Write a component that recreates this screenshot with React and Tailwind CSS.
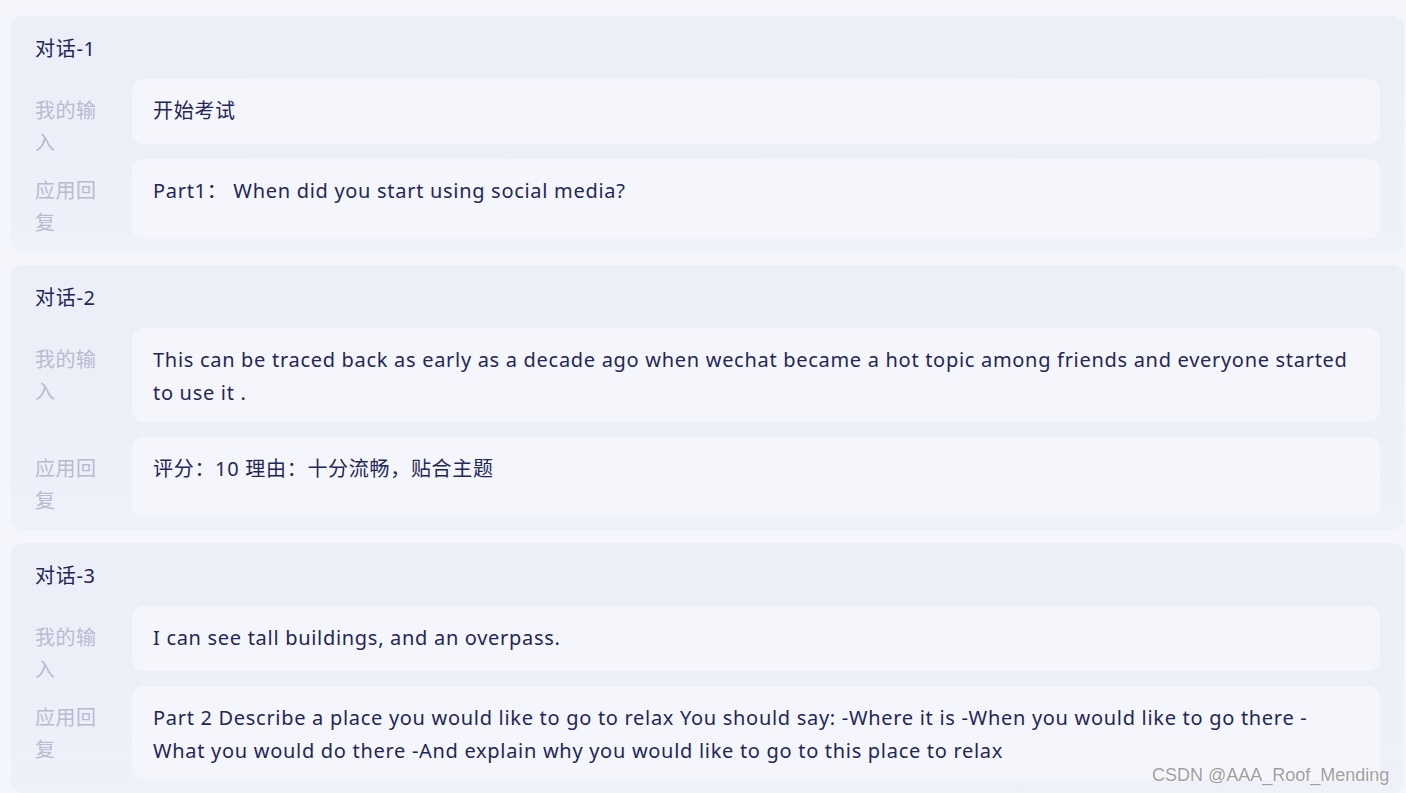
import React from 'react';

const DIALOGS = [
  {
    title: '对话-1',
    input: '开始考试',
    reply: 'Part1： When did you start using social media?',
  },
  {
    title: '对话-2',
    input:
      'This can be traced back as early as a decade ago when wechat became a hot topic among friends and everyone started to use it .',
    reply: '评分：10 理由：十分流畅，贴合主题',
  },
  {
    title: '对话-3',
    input: 'I can see tall buildings, and an overpass.',
    reply:
      'Part 2 Describe a place you would like to go to relax You should say: -Where it is -When you would like to go there -What you would do there -And explain why you would like to go to this place to relax',
  },
];

const FONT = { fontFamily: '"Noto Sans", "Noto Sans CJK SC", sans-serif' };

function Row({ label, text, last }) {
  return (
    <div className="flex items-stretch">
      <div className="w-[72px] mr-[25px] shrink-0 pt-[16px] text-[20px] leading-[32px] tracking-[0.5px] text-[#b9bbd0]">
        {label}
      </div>
      <div
        className={
          'flex-1 rounded-xl bg-[#f5f6fc] px-[21px] pt-[15px] pb-[13px] text-[20px] leading-[33px] tracking-[0.7px] text-[#23265a] ' +
          (last ? '' : 'mb-[15px]')
        }
      >
        {text}
      </div>
    </div>
  );
}

export default function App() {
  return (
    <div
      className="relative min-h-screen bg-[#f4f6fc] pt-4 pl-[11px] pr-[2px] pb-4 flex flex-col gap-[13px]"
      style={FONT}
    >
      {DIALOGS.map((d) => (
        <div
          key={d.title}
          className="rounded-xl bg-gradient-to-b from-[#eceef8] to-[#eef1f9] px-6 pt-[17px] pb-[13px]"
        >
          <div className="text-[20px] leading-[32px] tracking-[0.7px] text-[#23265a] mb-[14px]">
            {d.title}
          </div>
          <Row label="我的输入" text={d.input} />
          <Row label="应用回复" text={d.reply} last />
        </div>
      ))}
      <div
        className="absolute left-[1152px] top-[762px] text-[18px] text-[#a0a0a0]"
        style={{
          fontFamily: '"Liberation Sans", Arial, sans-serif',
          textShadow: '0 0 2px #ffffff, 0 0 2px #ffffff',
        }}
      >
        CSDN @AAA_Roof_Mending
      </div>
    </div>
  );
}
